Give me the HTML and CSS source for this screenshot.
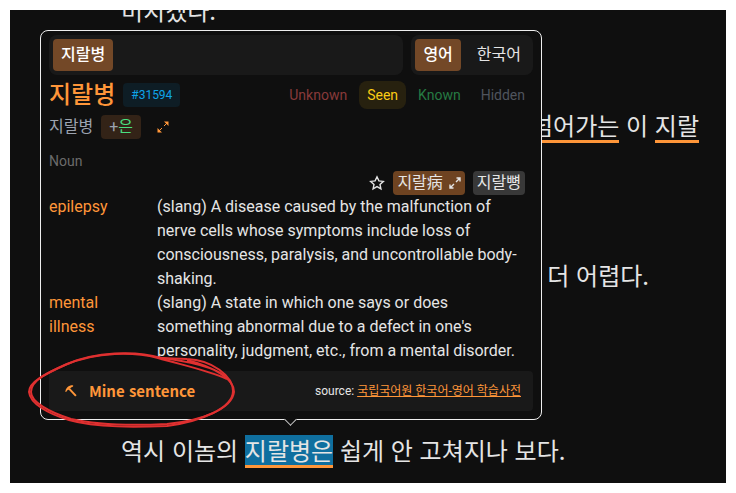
FILE: index.html
```html
<!DOCTYPE html>
<html lang="ko">
<head>
  <meta charset="UTF-8">
  <meta name="viewport" content="width=device-width, initial-scale=1.0">
  <title>지랄병</title>
  <link rel="stylesheet" href="styles.css">
</head>
<body>
  <main class="reader">
    <p class="line first">미치겠다.</p>
    <p class="line right"><span class="word">넘어가는</span> 이 <span class="word">지랄</span></p>
    <p class="line right short">더 어렵다.</p>
    <p class="line last">역시 이놈의 <span class="word selected">지랄병은</span> 쉽게 안 고쳐지나 보다.</p>

    <section class="popup">
      <div class="tabs">
        <div class="tab-group words">
          <button type="button" class="tab active">지랄병</button>
        </div>
        <div class="tab-group">
          <button type="button" class="tab active">영어</button>
          <button type="button" class="tab">한국어</button>
        </div>
      </div>

      <header class="head">
        <h1>지랄병</h1>
        <span class="rank">#31594</span>
        <div class="statuses">
          <button type="button" class="status unknown">Unknown</button>
          <button type="button" class="status seen">Seen</button>
          <button type="button" class="status known">Known</button>
          <button type="button" class="status hidden">Hidden</button>
        </div>
      </header>

      <div class="parts">
        <span>지랄병</span>
        <span class="particle">+<b>은</b></span>
        <button type="button" class="icon-btn" aria-label="Expand">
          <svg width="12" height="12" viewBox="0 0 12 12"><path d="M2 10 5 7M7 5l3-3"/><path class="solid" d="M7 .5h4.500V5zM.5 7v4.500H5z"/></svg>
        </button>
      </div>

      <div class="pos">Noun</div>

      <div class="forms">
        <button type="button" class="icon-btn star" aria-label="Favorite">
          <svg width="16" height="16" viewBox="0 0 16 16"><path d="M8 1.800 9.900 5.900l4.400.5-3.300 3 .9 4.400L8 11.600l-3.900 2.200.9-4.400-3.300-3 4.400-.5z"/></svg>
        </button>
        <button type="button" class="form hanja">지랄病
          <svg width="12" height="12" viewBox="0 0 12 12"><path d="M1 11 5 7M7 5l4-4M7.500 1H11v3.500M1 7.500V11h3.500"/></svg>
        </button>
        <button type="button" class="form">지랄뼝</button>
      </div>

      <dl class="meanings">
        <dt>epilepsy</dt>
        <dd>(slang) A disease caused by the malfunction of nerve cells whose symptoms include loss of consciousness, paralysis, and uncontrollable body-shaking.</dd>
        <dt>mental illness</dt>
        <dd>(slang) A state in which one says or does something abnormal due to a defect in one's personality, judgment, etc., from a mental disorder.</dd>
      </dl>

      <footer class="foot">
        <button type="button" class="mine">
          <svg width="12" height="12" viewBox="0 0 12 12"><path class="solid" d="M.4 6.400C.8 3 3.500.3 7.600.3 8.500.3 8.500 1.500 7.700 1.700 6.800 1.900 6.200 2.300 5.600 2.900L3.700 4.800C2.700 5 2 5.600 1.300 6.700 1 7.200.3 7 .4 6.400z"/><path class="handle" d="m4.300 3.900 6.600 7"/></svg>
          Mine sentence
        </button>
        <div class="source">source: <a href="#">국립국어원 한국어-영어 학습사전</a></div>
      </footer>
      <span class="arrow"></span>

      <svg class="circle" width="210" height="80" viewBox="0 0 210 80">
        <path d="M200 29C180 20 155 15 131 8 108 2 70 1 38 15 18 24 2 32 2 42 3 54 22 64 42 70 70 78 110 77 140 76 175 71 206 58 206 41 206 26 185 10 160 9 145 8 138 9 128 7"/>
        <path d="M160 10C186 17 207 28 207 42 205 60 172 71 140 74 100 76 70 75 44 69 22 62 4 52 4 42 4 30 22 22 40 14 68 2 108 0 134 8 162 11 188 18 198 26"/>
      </svg>
    </section>
  </main>
</body>
</html>
```

FILE: styles.css
```css
:root {
  --bg: #0f0f0f;
  --panel: #191919;
  --orange: #ff9639;
  --brown: #734827;
  --text: #e5e5e5;
}

* {
  margin: 0;
  padding: 0;
  box-sizing: border-box;
}

body {
  padding: 10px;
  background: #fff;
  color: var(--text);
  font-family: Roboto, "Noto Sans CJK KR", sans-serif;
  font-size: 16px;
  line-height: 24px;
}

button {
  border: none;
  background: none;
  color: inherit;
  font: inherit;
  cursor: pointer;
}

svg {
  fill: none;
  stroke: currentColor;
}

/* text being read, scrolled so the last line sits at the bottom */
.reader {
  position: relative;
  display: flex;
  flex-direction: column;
  justify-content: flex-end;
  height: calc(100vh - 20px);
  padding: 0 27px 8px 111px;
  background: var(--bg);
  overflow: hidden;
}

.line {
  flex: none;
  font-family: "Noto Sans CJK KR", sans-serif;
  font-size: 24px;
  line-height: 50px;
}

.first {
  margin-bottom: 65px;
}

.right {
  margin-bottom: 100px;
  text-align: right;
}

.short {
  margin-bottom: 125px;
  padding-right: 50px;
}

.word {
  display: inline-block;
  line-height: 30px;
  border-bottom: 3px solid var(--orange);
}

.selected {
  background: #0f6f9f;
}

/* dictionary popup */
.popup {
  position: absolute;
  top: 20px;
  left: 30px;
  width: 502px;
  padding: 4px 8px 8px;
  background: var(--bg);
  border: 1px solid #eee;
  border-radius: 8px;
}

.tabs {
  display: flex;
  gap: 8px;
}

.tab-group {
  display: flex;
  gap: 8px;
  padding: 4px;
  background: var(--panel);
  border-radius: 8px;
}

.words {
  flex: 1;
}

.tab {
  height: 32px;
  padding: 0 8px;
  border-radius: 4px;
}

.tab.active {
  background: var(--brown);
  color: #fff;
  font-weight: 500;
}

.head {
  display: flex;
  align-items: center;
  gap: 8px;
  height: 40px;
}

.head h1 {
  color: var(--orange);
  font-size: 24px;
  font-weight: 500;
}

.rank {
  padding: 0 8px;
  background: #0e1d25;
  border-radius: 4px;
  color: #0ea5e9;
  font-size: 12px;
}

.statuses {
  display: flex;
  gap: 4px;
  margin-left: auto;
}

.status {
  height: 28px;
  padding: 0 8px;
  border-radius: 8px;
  font-size: 14px;
}

.unknown {
  color: #883a3a;
}

.seen {
  background: #27210f;
  color: #facc15;
}

.known {
  color: #267a43;
}

.hidden {
  color: #4f545d;
}

.parts {
  display: flex;
  align-items: center;
  gap: 8px;
  height: 24px;
  color: #9ca3af;
}

.particle {
  height: 24px;
  padding: 0 8px;
  background: #332317;
  border-radius: 4px;
}

.particle b {
  color: #4ade80;
  font-weight: 400;
}

.icon-btn {
  display: flex;
  padding: 0 8px;
  color: var(--orange);
}

.solid {
  fill: currentColor;
  stroke: none;
}

.pos {
  height: 32px;
  padding-top: 10px;
  color: #6b6b6b;
  font-size: 14px;
}

.forms {
  display: flex;
  justify-content: flex-end;
  align-items: center;
  gap: 8px;
  height: 24px;
  padding-right: 8px;
}

.star {
  padding: 0;
  color: var(--text);
}

.form {
  display: flex;
  align-items: center;
  gap: 6px;
  height: 24px;
  padding: 0 4px;
  background: #383838;
  border-radius: 4px;
}

.hanja {
  background: #6e4321;
}

.star svg,
.hanja svg {
  stroke-width: 1.4;
}

.meanings {
  display: grid;
  grid-template-columns: 92px 1fr;
  column-gap: 16px;
  padding-right: 8px;
}

.meanings dt {
  color: var(--orange);
}

.foot {
  display: flex;
  justify-content: space-between;
  align-items: center;
  height: 40px;
  margin-top: 8px;
  padding: 0 12px 0 16px;
  background: var(--panel);
  border-radius: 4px;
}

.mine {
  display: flex;
  align-items: center;
  gap: 12px;
  color: var(--orange);
  font-family: "Noto Sans CJK KR", sans-serif;
  font-size: 15px;
  font-weight: 700;
}

.handle {
  stroke-width: 2;
}

.source {
  font-size: 12px;
}

.source a {
  color: var(--orange);
}

.arrow {
  position: absolute;
  bottom: -5px;
  left: 245px;
  width: 9px;
  height: 9px;
  background: var(--bg);
  border: solid #ccc;
  border-width: 0 1px 1px 0;
  transform: rotate(45deg);
}

/* hand-drawn mark around the mine button */
.circle {
  position: absolute;
  left: -14px;
  bottom: -11px;
  color: #df3030;
  stroke-width: 2;
  pointer-events: none;
}
```
